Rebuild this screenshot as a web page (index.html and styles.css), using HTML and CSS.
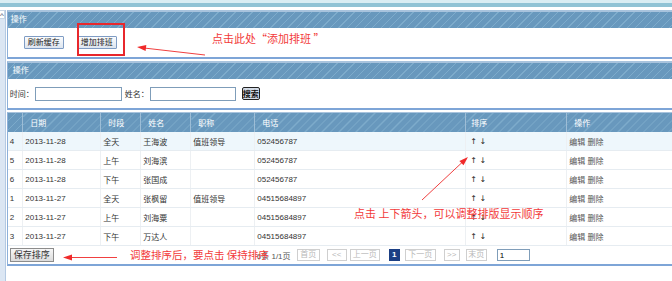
FILE: index.html
```html
<!DOCTYPE html>
<html lang="zh-CN">
<head>
    <meta charset="UTF-8">
    <title>排班管理</title>
    <link rel="stylesheet" href="styles.css">
</head>
<body>
    <div class="topbar"></div>
    <div class="frame">
        <div class="sidebar"><span class="scroll-up">^</span></div>
        <div class="main">
            <div class="panel">
                <div class="panel-head">操作</div>
                <div class="toolbar">
                    <button class="btn">刷新缓存</button>
                    <button class="btn">增加排班</button>
                </div>
            </div>

            <div class="panel">
                <div class="panel-head head-2">操作</div>
                <div class="search">
                    <label class="label">时间：</label>
                    <input class="field" type="text">
                    <label class="label label-name">姓名：</label>
                    <input class="field field-name" type="text">
                    <button class="btn-search">搜索</button>
                </div>
            </div>

            <div class="panel panel-grid">
                <table class="grid">
                    <colgroup>
                        <col class="c-no"><col class="c-date"><col class="c-time"><col class="c-name">
                        <col class="c-title"><col class="c-phone"><col class="c-sort"><col class="c-op">
                    </colgroup>
                    <thead>
                        <tr>
                            <th></th><th>日期</th><th>时段</th><th>姓名</th>
                            <th>职称</th><th>电话</th><th class="th-sort">排序</th><th>操作</th>
                        </tr>
                    </thead>
                    <tbody>
                        <tr class="hl">
                            <td>4</td><td>2013-11-28</td><td>全天</td><td>王海波</td>
                            <td>值班领导</td><td>052456787</td><td class="sort">↑ ↓</td><td class="ops">编辑 删除</td>
                        </tr>
                        <tr>
                            <td>5</td><td>2013-11-28</td><td>上午</td><td>刘海滨</td>
                            <td></td><td>052456787</td><td class="sort">↑ ↓</td><td class="ops">编辑 删除</td>
                        </tr>
                        <tr>
                            <td>6</td><td>2013-11-28</td><td>下午</td><td>张国成</td>
                            <td></td><td>052456787</td><td class="sort">↑ ↓</td><td class="ops">编辑 删除</td>
                        </tr>
                        <tr>
                            <td>1</td><td>2013-11-27</td><td>全天</td><td>张枫留</td>
                            <td>值班领导</td><td>04515684897</td><td class="sort">↑ ↓</td><td class="ops">编辑 删除</td>
                        </tr>
                        <tr>
                            <td>2</td><td>2013-11-27</td><td>上午</td><td>刘海粟</td>
                            <td></td><td>04515684897</td><td class="sort">↑ ↓</td><td class="ops">编辑 删除</td>
                        </tr>
                        <tr>
                            <td>3</td><td>2013-11-27</td><td>下午</td><td>万达人</td>
                            <td></td><td>04515684897</td><td class="sort">↑ ↓</td><td class="ops">编辑 删除</td>
                        </tr>
                    </tbody>
                </table>
                <div class="footer">
                    <button class="btn-save">保存排序</button>
                    <div class="pager">
                        <span class="info">6条 1/1页</span>
                        <span class="pg pg-first">首页</span>
                        <span class="pg pg-prev2">&lt;&lt;</span>
                        <span class="pg pg-prev">上一页</span>
                        <span class="pg-current">1</span>
                        <span class="pg pg-next">下一页</span>
                        <span class="pg pg-next2">&gt;&gt;</span>
                        <span class="pg pg-last">末页</span>
                        <input class="pg-input" type="text" value="1">
                    </div>
                </div>
            </div>
        </div>
    </div>

    <!-- annotations drawn over the screenshot -->
    <div class="notes">
        <div class="note-box"></div>
        <svg class="note-arrows" width="672" height="281" viewBox="0 0 672 281">
            <line x1="205" y1="55" x2="144" y2="48" />
            <polygon points="137,47 145.6,51 146.3,45.1" />
            <line x1="422" y1="200" x2="462" y2="162.5" />
            <polygon points="468,157 463.5,165.3 459.4,160.9" />
            <line x1="117" y1="257.5" x2="70" y2="257.5" />
            <polygon points="63,257.5 72,254.5 72,260.5" />
        </svg>
        <span class="note note-add">点击此处“添加排班 ”</span>
        <span class="note note-sort">点击 上下箭头，可以调整排版显示顺序</span>
        <span class="note note-save">调整排序后，要点击 保持排序</span>
    </div>
</body>
</html>
```

FILE: styles.css
```css
body {
    margin: 0;
    height: 281px;
    overflow: hidden;
    position: relative;
    font-family: "Liberation Sans", "Noto Sans CJK SC", sans-serif;
    font-size: 8px;
    color: #333;
    background: #fff;
    text-spacing-trim: space-all;
}
.topbar {
    height: 10px;
    background: linear-gradient(#d9edf3 0 3px, #90c3d5 3px 7px, #fff 7px);
}
.frame {
    display: flex;
}
.sidebar {
    width: 8px;
    height: 271px;
    background: #dbe6f3;
    border-right: 1px solid #b4c9e2;
}
.scroll-up {
    display: block;
    height: 7px;
    background: #fff;
    border: 1px solid #c8d6e6;
    border-left: none;
    font-size: 8px;
    line-height: 10px;
    text-align: center;
    color: #345;
}
.main {
    flex: none;
    width: 671px;
    margin-left: 1px;
}
.panel {
    border: 1px solid #8db0d9;
    border-top: 2px solid #a8c3dd;
    border-bottom: 2px solid #7ea5d7;
    margin-bottom: 2px;
}
.panel-head, .grid th {
    background: repeating-linear-gradient(-45deg, #6898bd 0 5px, #7dabcb 5px 6px);
    color: #fff;
}
.panel-head {
    height: 16px;
    line-height: 16px;
    padding-left: 3px;
}
.head-2 {
    padding-left: 5px;
}
.toolbar {
    height: 29px;
    display: flex;
    align-items: center;
    gap: 13px;
    padding-left: 16px;
}
.btn {
    height: 13px;
    padding: 0 3px;
    margin: 0;
    font-family: inherit;
    font-size: 8px;
    line-height: 11px;
    color: #222;
    border: 1px solid #7f9cc4;
    border-radius: 1px;
    background: linear-gradient(#fbfcfd, #dde5ef);
}
.search {
    height: 29px;
    display: flex;
    align-items: center;
    padding-left: 2px;
}
.label {
    width: 24px;
    font-family: "Noto Sans CJK SC", sans-serif;
    white-space: nowrap;
}
.field {
    width: 87px;
    height: 14px;
    box-sizing: border-box;
    margin: 0 0 0 1px;
    padding: 0;
    border: 1px solid #7f9db9;
}
.label-name {
    margin-left: 3px;
}
.field-name {
    width: 86px;
}
.btn-search {
    width: 18px;
    height: 13px;
    margin-left: 6px;
    padding: 0;
    font-family: inherit;
    font-size: 8px;
    font-weight: bold;
    color: #111;
    border: 1px solid #222;
    border-radius: 2px;
    background: #d3dbe6;
}
.panel-grid {
    border-top-width: 1px;
}
.grid {
    width: 669px;
    border-collapse: collapse;
    table-layout: fixed;
}
.c-no { width: 15px; }
.c-date { width: 78px; }
.c-time { width: 40px; }
.c-name { width: 50px; }
.c-title { width: 64px; }
.c-phone { width: 211px; }
.c-sort { width: 101px; }
.c-op { width: 110px; }
.grid th {
    height: 19px;
    padding: 0 0 0 7px;
    text-align: left;
    font-weight: normal;
    border-right: 1px solid #9dbdd6;
}
.grid th.th-sort {
    padding-left: 5px;
}
.grid td {
    height: 18px;
    padding: 0 2px;
    white-space: nowrap;
    overflow: hidden;
    border-bottom: 1px solid #e6ecf1;
    border-right: 1px solid #edf0f3;
}
.grid tr.hl td {
    background: #eef7fc;
}
.grid td.sort {
    padding-left: 4px;
    font-family: "DejaVu Sans", sans-serif;
    font-size: 8px;
    color: #222;
}
.grid td.ops {
    color: #555;
}
.footer {
    height: 18px;
    display: flex;
    align-items: center;
    padding-left: 2px;
}
.btn-save {
    height: 14px;
    width: 44px;
    padding: 0;
    font-family: "Noto Sans CJK SC", sans-serif;
    font-size: 9px;
    line-height: 12px;
    color: #333;
    border: 1px solid #8c8c8c;
    background: linear-gradient(#f7f7f7, #dcdcdc);
}
.pager {
    display: flex;
    align-items: center;
    margin-left: 203px;
    color: #555;
}
.info {
    width: 40px;
}
.pg {
    box-sizing: border-box;
    height: 12px;
    line-height: 10px;
    text-align: center;
    color: #b8b8b8;
    border: 1px solid #cfcfcf;
    background: #fff;
}
.pg-first { width: 23px; }
.pg-prev2 { width: 20px; margin-left: 7px; }
.pg-prev { width: 30px; margin-left: 3px; }
.pg-current {
    width: 11px;
    height: 12px;
    margin-left: 9px;
    line-height: 12px;
    text-align: center;
    color: #fff;
    font-weight: bold;
    background: #1b3f84;
}
.pg-next { width: 31px; margin-left: 5px; }
.pg-next2 { width: 16px; margin-left: 8px; }
.pg-last { width: 21px; margin-left: 6px; }
.pg-input {
    width: 33px;
    height: 12px;
    box-sizing: border-box;
    margin-left: 10px;
    padding: 0 2px;
    font-size: 8px;
    border: 1px solid #7f9db9;
}
.notes {
    position: absolute;
    left: 0;
    top: 0;
    width: 672px;
    height: 281px;
    pointer-events: none;
}
.note-box {
    position: absolute;
    left: 77px;
    top: 23px;
    width: 44px;
    height: 29px;
    border: 2px solid #e8272c;
}
.note-arrows {
    position: absolute;
    left: 0;
    top: 0;
}
.note-arrows line {
    stroke: #f04040;
    stroke-width: 1;
}
.note-arrows polygon {
    fill: #f02a2a;
}
.note {
    position: absolute;
    font-family: "Noto Sans CJK SC", sans-serif;
    font-size: 11px;
    line-height: 13px;
    color: #f23a3a;
    white-space: nowrap;
}
.note-add {
    left: 212px;
    top: 32px;
}
.note-sort {
    left: 354px;
    top: 207px;
}
.note-save {
    left: 130px;
    top: 248px;
    font-size: 10.5px;
}
```
